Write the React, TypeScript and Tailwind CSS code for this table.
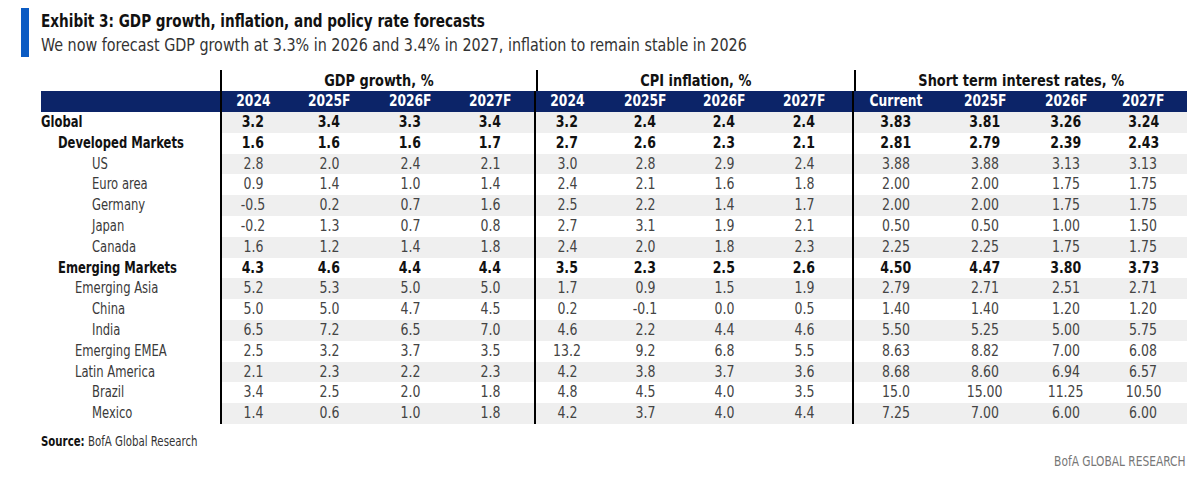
import React from "react";

type Row = { label: string; indent: number; bold?: boolean; vals: string[] };

const rows: Row[] = [
  { label: "Global", indent: 0, bold: true, vals: ["3.2", "3.4", "3.3", "3.4", "3.2", "2.4", "2.4", "2.4", "3.83", "3.81", "3.26", "3.24"] },
  { label: "Developed Markets", indent: 1, bold: true, vals: ["1.6", "1.6", "1.6", "1.7", "2.7", "2.6", "2.3", "2.1", "2.81", "2.79", "2.39", "2.43"] },
  { label: "US", indent: 3, vals: ["2.8", "2.0", "2.4", "2.1", "3.0", "2.8", "2.9", "2.4", "3.88", "3.88", "3.13", "3.13"] },
  { label: "Euro area", indent: 3, vals: ["0.9", "1.4", "1.0", "1.4", "2.4", "2.1", "1.6", "1.8", "2.00", "2.00", "1.75", "1.75"] },
  { label: "Germany", indent: 3, vals: ["-0.5", "0.2", "0.7", "1.6", "2.5", "2.2", "1.4", "1.7", "2.00", "2.00", "1.75", "1.75"] },
  { label: "Japan", indent: 3, vals: ["-0.2", "1.3", "0.7", "0.8", "2.7", "3.1", "1.9", "2.1", "0.50", "0.50", "1.00", "1.50"] },
  { label: "Canada", indent: 3, vals: ["1.6", "1.2", "1.4", "1.8", "2.4", "2.0", "1.8", "2.3", "2.25", "2.25", "1.75", "1.75"] },
  { label: "Emerging Markets", indent: 1, bold: true, vals: ["4.3", "4.6", "4.4", "4.4", "3.5", "2.3", "2.5", "2.6", "4.50", "4.47", "3.80", "3.73"] },
  { label: "Emerging Asia", indent: 2, vals: ["5.2", "5.3", "5.0", "5.0", "1.7", "0.9", "1.5", "1.9", "2.79", "2.71", "2.51", "2.71"] },
  { label: "China", indent: 3, vals: ["5.0", "5.0", "4.7", "4.5", "0.2", "-0.1", "0.0", "0.5", "1.40", "1.40", "1.20", "1.20"] },
  { label: "India", indent: 3, vals: ["6.5", "7.2", "6.5", "7.0", "4.6", "2.2", "4.4", "4.6", "5.50", "5.25", "5.00", "5.75"] },
  { label: "Emerging EMEA", indent: 2, vals: ["2.5", "3.2", "3.7", "3.5", "13.2", "9.2", "6.8", "5.5", "8.63", "8.82", "7.00", "6.08"] },
  { label: "Latin America", indent: 2, vals: ["2.1", "2.3", "2.2", "2.3", "4.2", "3.8", "3.7", "3.6", "8.68", "8.60", "6.94", "6.57"] },
  { label: "Brazil", indent: 3, vals: ["3.4", "2.5", "2.0", "1.8", "4.8", "4.5", "4.0", "3.5", "15.0", "15.00", "11.25", "10.50"] },
  { label: "Mexico", indent: 3, vals: ["1.4", "0.6", "1.0", "1.8", "4.2", "3.7", "4.0", "4.4", "7.25", "7.00", "6.00", "6.00"] },
];

const headers = ["2024", "2025F", "2026F", "2027F", "2024", "2025F", "2026F", "2027F", "Current", "2025F", "2026F", "2027F"];

const GRID =
  "grid grid-cols-[179px_64px_90px_72px_88px_64px_94px_64px_96px_86px_94px_68px_87px]";

const indentCls = ["pl-0", "pl-[17px]", "pl-[34px]", "pl-[51px]"];

const lineCls = (i: number) => (i === 0 || i === 4 || i === 8 ? "border-l-2 border-black" : "");

export default function App() {
  return (
    <div className="w-[1197px] h-[481px] bg-white relative overflow-hidden [font-family:'Liberation_Sans_Narrow','DejaVu_Sans_Condensed',Roboto,sans-serif] [font-stretch:condensed]">
      {/* Title block */}
      <div className="flex pt-[8px] pl-[21px]">
        <div className="w-[8px] h-[49px] bg-[#0b5bc3]" />
        <div className="ml-[12px] flex flex-col">
          <div className="h-[25px] text-[18px] leading-[25px] font-bold text-[#111] whitespace-nowrap">
            <span className="inline-block origin-left scale-x-[0.84]">
              Exhibit 3: GDP growth, inflation, and policy rate forecasts
            </span>
          </div>
          <div className="h-[24px] text-[17.5px] leading-[24px] text-[#333] whitespace-nowrap">
            <span className="inline-block origin-left scale-x-[0.91]">
              We now forecast GDP growth at 3.3% in 2026 and 3.4% in 2027, inflation to remain stable in 2026
            </span>
          </div>
        </div>
      </div>

      {/* Table */}
      <div className="mt-[13px] ml-[41px] w-[1146px]">
        {/* Group headers */}
        <div className="grid grid-cols-[179px_316px_318px_333px] h-[21px]">
          <div />
          {["GDP growth, %", "CPI inflation, %", "Short term interest rates, %"].map((g) => (
            <div key={g} className="border-l-2 border-black text-center text-[16.5px] leading-[21px] font-bold text-[#111] whitespace-nowrap">
              <span className="inline-block scale-x-[0.87]">{g}</span>
            </div>
          ))}
        </div>
        {/* Column header band */}
        <div className={`${GRID} h-[21px] bg-[#0c2468]`}>
          <div />
          {headers.map((h, i) => (
            <div key={i} className={`${lineCls(i)} text-center text-[15.5px] leading-[21px] font-bold text-white whitespace-nowrap`}>
              <span className="inline-block scale-x-[0.88]">{h}</span>
            </div>
          ))}
        </div>
        {/* Data rows */}
        {rows.map((r, ri) => (
          <div key={ri} className={`${GRID} h-[20.8px]`}>
            <div
              className={`${indentCls[r.indent]} text-[15.5px] leading-[20.8px] whitespace-nowrap ${
                r.bold ? "font-bold text-[#111]" : "text-[#3a3a3a]"
              }`}
            >
              <span className="inline-block origin-left scale-x-[0.83]">{r.label}</span>
            </div>
            {r.vals.map((v, i) => (
              <div
                key={i}
                className={`${lineCls(i)} ${ri % 2 === 0 ? "bg-[#efefef]" : "bg-white"} text-center text-[16px] leading-[20.8px] whitespace-nowrap ${
                  r.bold ? "font-bold text-[#111]" : "text-[#444]"
                }`}
              >
                <span className="inline-block scale-x-[0.87]">{v}</span>
              </div>
            ))}
          </div>
        ))}
      </div>

      {/* Footer */}
      <div className="mt-[8px] ml-[41px] text-[14px] leading-[18px] text-[#333] whitespace-nowrap">
        <span className="inline-block origin-left scale-x-[0.81]">
          <span className="font-bold text-[#111]">Source:</span> BofA Global Research
        </span>
      </div>
      <div className="absolute right-[12px] top-[452px] text-[14px] leading-[18px] text-[#777] whitespace-nowrap">
        <span className="inline-block origin-right scale-x-[0.845]">BofA GLOBAL RESEARCH</span>
      </div>
    </div>
  );
}
